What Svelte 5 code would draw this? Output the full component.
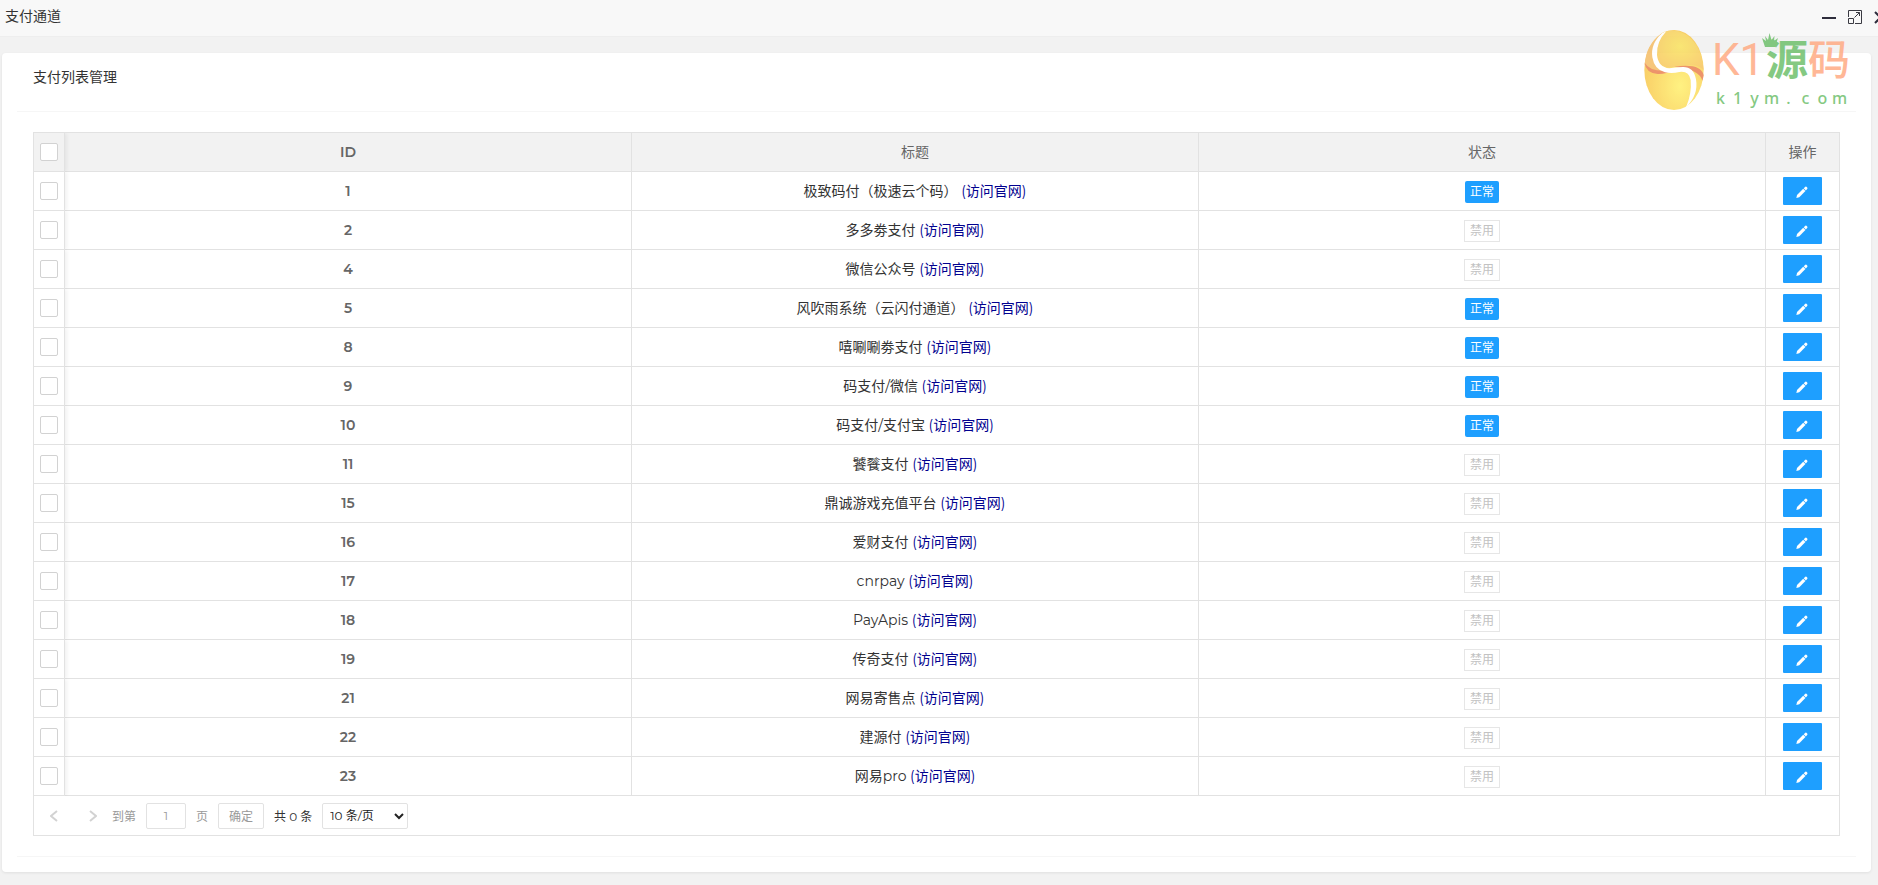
<script lang="ts">
  type Channel = {
    id: number;
    title: string;
    enabled: boolean;
  };

  const channels: Channel[] = [
    { id: 1, title: '极致码付（极速云个码）', enabled: true },
    { id: 2, title: '多多劵支付', enabled: false },
    { id: 4, title: '微信公众号', enabled: false },
    { id: 5, title: '风吹雨系统（云闪付通道）', enabled: true },
    { id: 8, title: '嘻唰唰劵支付', enabled: true },
    { id: 9, title: '码支付/微信', enabled: true },
    { id: 10, title: '码支付/支付宝', enabled: true },
    { id: 11, title: '饕餮支付', enabled: false },
    { id: 15, title: '鼎诚游戏充值平台', enabled: false },
    { id: 16, title: '爱财支付', enabled: false },
    { id: 17, title: 'cnrpay', enabled: false },
    { id: 18, title: 'PayApis', enabled: false },
    { id: 19, title: '传奇支付', enabled: false },
    { id: 21, title: '网易寄售点', enabled: false },
    { id: 22, title: '建源付', enabled: false },
    { id: 23, title: '网易pro', enabled: false }
  ];

  let selected = $state<number[]>([]);
  let page = $state('1');
  let limit = $state('10');

  let allSelected = $derived(selected.length === channels.length);

  function toggleAll() {
    selected = allSelected ? [] : channels.map((c) => c.id);
  }
</script>

<div class="layer">
  <header class="layer__title">
    <span>支付通道</span>
    <div class="layer__tools">
      <button type="button" aria-label="最小化">
        <svg width="14" height="14" viewBox="0 0 14 14"><path d="M0 8h14" stroke="#2e2d3c" stroke-width="2" /></svg>
      </button>
      <button type="button" aria-label="最大化">
        <svg width="14" height="14" viewBox="0 0 14 14" fill="none" stroke="#3a3a42">
          <path d="M.5 7V.5h13v13H7" />
          <path d="M.5 8.5h5v5h-5z" />
          <path d="M6.5 7.5l5-5M8 2.5h3.5V6" />
        </svg>
      </button>
      <button type="button" aria-label="关闭">
        <svg width="14" height="14" viewBox="0 0 14 14"><path d="M1 2l11 11M12 2L1 13" stroke="#2e2d3c" stroke-width="2" /></svg>
      </button>
    </div>
  </header>

  <main class="card">
    <h2 class="card__header">支付列表管理</h2>

    <div class="grid">
      <table>
        <colgroup>
          <col class="col-check" />
          <col />
          <col />
          <col />
          <col class="col-tool" />
        </colgroup>
        <thead>
          <tr>
            <th class="check"><input type="checkbox" aria-label="全选" checked={allSelected} onchange={toggleAll} /></th>
            <th class="num">ID</th>
            <th>标题</th>
            <th>状态</th>
            <th>操作</th>
          </tr>
        </thead>
        <tbody>
          {#each channels as channel (channel.id)}
            <tr>
              <td class="check">
                <input type="checkbox" aria-label={channel.title} value={channel.id} bind:group={selected} />
              </td>
              <td class="num">{channel.id}</td>
              <td class="name">{channel.title} <a href="#{channel.id}">(访问官网)</a></td>
              <td>
                <button type="button" class="tag" class:tag--off={!channel.enabled}>{channel.enabled ? '正常' : '禁用'}</button>
              </td>
              <td>
                <button type="button" class="edit" aria-label="编辑">
                  <svg width="12" height="12" viewBox="0 0 14 14" fill="#fff">
                    <path d="M.4 14l.8-3.400 7.200-7.300 2.600 2.500-7.200 7.200z" />
                    <path d="M9 2.700l1.300-1.300a1.600 1.600 0 0 1 2.500 0a1.600 1.600 0 0 1 0 2.300l-1.300 1.600z" />
                  </svg>
                </button>
              </td>
            </tr>
          {/each}
        </tbody>
      </table>

      <form class="pager" onsubmit={(e) => e.preventDefault()}>
        <button type="button" class="pager__arrow" aria-label="上一页">
          <svg width="8" height="12" viewBox="0 0 8 12"><path d="M7 1L1 6l6 5" /></svg>
        </button>
        <button type="button" class="pager__arrow" aria-label="下一页">
          <svg width="8" height="12" viewBox="0 0 8 12"><path d="M1 1l6 5-6 5" /></svg>
        </button>
        <label for="page">到第</label>
        <input id="page" type="text" bind:value={page} />
        <span>页</span>
        <button type="submit" class="pager__ok">确定</button>
        <span class="pager__count">共 0 条</span>
        <select aria-label="每页条数" bind:value={limit}>
          <option value="10">10 条/页</option>
          <option value="20">20 条/页</option>
          <option value="50">50 条/页</option>
        </select>
      </form>
    </div>
  </main>

  <div class="mark">
    <svg class="mark__egg" width="60" height="80" viewBox="0 0 178 240">
      <defs>
        <radialGradient id="top" cx=".5" cy=".4" r=".7">
          <stop offset="0" stop-color="#fbe45f" />
          <stop offset="1" stop-color="#f7c45c" />
        </radialGradient>
        <radialGradient id="low" cx=".6" cy=".7" r=".6">
          <stop offset="0" stop-color="#fff06c" />
          <stop offset="1" stop-color="#f9c84e" />
        </radialGradient>
      </defs>
      <ellipse cx="89" cy="120" rx="89" ry="120" fill="url(#low)" />
      <path d="M52 10C90-14 170 10 178 120Q160 100 115 108L75 113Q30 108 38 60Z" fill="url(#top)" />
      <path d="M52 10Q4 45 1 105Q24 128 60 122Q20 100 52 10Z" fill="#f5bd65" />
      <path d="M1 98Q20 130 85 120Q66 133 40 132Q4 128 1 98Z" fill="#ea8252" />
      <path d="M90 110Q170 98 178 136Q176 146 174 152Q166 118 90 110Z" fill="#ea8252" />
      <path d="M54 9Q18 40 24 82Q30 119 62 127Q84 131 105 126Q134 122 139 150Q143 190 125 232Q163 195 155 148Q148 110 115 111Q92 112 75 115Q42 112 38 75Q36 35 66 4Z" fill="#fff" />
    </svg>
    <div class="mark__words">
      <div class="mark__name">
        <span class="mark__latin">K1</span>
        <span class="mark__green">源<svg class="mark__crown" width="16" height="16" viewBox="0 0 16 16">
            <path d="M3 15L0 6l4 3L3 4l3 4 1.500-7L9.500 8l3-4-.5 5 4-3-3 9z" />
          </svg></span>
        <span>码</span>
      </div>
      <div class="mark__site">
        {#each 'k1ym.com' as letter}<span>{letter}</span>{/each}
      </div>
    </div>
  </div>
</div>

<style>
  :global(body) {
    margin: 0;
    background: #f2f2f2;
    font-family: Montserrat, Inter, 'Noto Sans CJK SC', sans-serif;
    font-size: 14px;
    color: #333;
  }
  button,
  input,
  select {
    font-family: inherit;
    margin: 0;
  }
  button {
    cursor: pointer;
  }
  .layer {
    position: relative;
    overflow: hidden;
    padding-bottom: 12px;
  }
  .layer__title {
    display: flex;
    justify-content: space-between;
    height: 36px;
    padding-left: 5px;
    background: #f8f8f8;
    border-bottom: 1px solid #eee;
    line-height: 32px;
  }
  .layer__tools {
    display: flex;
    align-items: center;
    gap: 12px;
    height: 34px;
    margin-right: -10px;
  }
  .layer__tools button {
    display: flex;
    padding: 0;
    border: 0;
    background: none;
  }
  .card {
    margin: 16px 7px 0 2px;
    padding: 0 15px 15px;
    background: #fff;
    border-radius: 4px;
    box-shadow: 0 1px 3px rgba(0, 0, 0, 0.08);
  }
  .card__header {
    margin: 0;
    padding: 14px 16px 24px;
    border-bottom: 1px solid #f6f6f6;
    font-size: 14px;
    font-weight: 400;
    line-height: 20px;
  }
  .grid {
    margin: 20px 16px;
    border: 1px solid #e2e2e2;
  }
  .card::after {
    content: '';
    display: block;
    height: 1px;
    background: #f6f6f6;
  }
  table {
    width: 100%;
    table-layout: fixed;
    border-collapse: separate;
    border-spacing: 0;
  }
  .col-check {
    width: 31px;
  }
  .col-tool {
    width: 73px;
  }
  th,
  td {
    box-sizing: border-box;
    height: 39px;
    padding: 0;
    border-right: 1px solid #e2e2e2;
    border-bottom: 1px solid #e2e2e2;
    text-align: center;
    vertical-align: middle;
    font-weight: 400;
    line-height: 20px;
    color: #666;
  }
  th {
    background: #f2f2f2;
  }
  th:last-child,
  td:last-child {
    border-right: 0;
  }
  .num {
    font-weight: 600;
  }
  .check {
    box-shadow: 2px 0 4px rgba(0, 0, 0, 0.06);
    clip-path: inset(0 -8px 0 0);
  }
  .check input {
    display: block;
    appearance: none;
    width: 18px;
    height: 18px;
    margin: 0 auto;
    background: #fff;
    border: 1px solid #d2d2d2;
    border-radius: 2px;
  }
  .check input:checked {
    background: #1e9fff;
    border-color: #1e9fff;
  }
  .name {
    color: #333;
  }
  a {
    color: #01018f;
    text-decoration: none;
  }
  .tag {
    box-sizing: border-box;
    display: block;
    width: 34px;
    height: 22px;
    margin: 2px auto 0;
    padding: 0;
    border: 0;
    border-radius: 2px;
    background: #1e9fff;
    color: #fff;
    font-size: 12px;
    line-height: 20px;
  }
  .tag--off {
    width: 36px;
    border: 1px solid #e6e6e6;
    border-radius: 0;
    background: #fff;
    color: #c2c2c2;
  }
  .edit {
    display: flex;
    justify-content: center;
    align-items: center;
    width: 39px;
    height: 28px;
    margin: 0 auto;
    padding: 2px 2px 0 0;
    border: 0;
    border-radius: 1px;
    background: #1e9fff;
  }
  .pager {
    display: flex;
    align-items: center;
    height: 39px;
    padding-left: 16px;
    font-size: 12px;
    color: #999;
  }
  .pager > * {
    box-sizing: border-box;
    margin-right: 10px;
  }
  .pager__arrow {
    display: flex;
    width: 8px;
    padding: 0;
    border: 0;
    background: none;
  }
  .pager__arrow:first-child {
    margin-right: 31px;
  }
  .pager__arrow + label {
    margin-left: 5px;
  }
  .pager__arrow path {
    fill: none;
    stroke: #d2d2d2;
    stroke-width: 2;
  }
  .pager input,
  .pager__ok,
  .pager select {
    height: 26px;
    padding: 0;
    border: 1px solid #e2e2e2;
    border-radius: 2px;
    background: #fff;
    font-size: 12px;
    color: #999;
  }
  .pager input {
    width: 40px;
    text-align: center;
  }
  .pager__ok {
    width: 46px;
  }
  .pager__count {
    color: #333;
  }
  .pager select {
    width: 86px;
    padding-left: 3px;
    color: #222;
  }
  /* site mark floats over the window corner */
  .mark {
    position: absolute;
    top: 30px;
    right: 28px;
    display: flex;
    gap: 8px;
    opacity: 0.85;
    color: #ffab84;
    pointer-events: none;
  }
  .mark__name {
    display: flex;
    align-items: center;
    height: 60px;
    font-size: 42px;
    font-weight: 500;
    line-height: 60px;
  }
  .mark__latin {
    width: 54px;
    font-family: 'Liberation Sans Narrow', Roboto, sans-serif;
    font-size: 44px;
    font-weight: 400;
  }
  .mark__green {
    position: relative;
    color: #6fc06d;
    font-weight: 700;
  }
  .mark__crown {
    position: absolute;
    left: -4px;
    top: 2px;
    fill: #6fc06d;
  }
  .mark__site {
    display: grid;
    grid-template-columns: repeat(8, 1fr);
    margin-right: 2px;
    font-family: 'Noto Sans', sans-serif;
    font-size: 16px;
    font-weight: 500;
    line-height: 16px;
    text-align: center;
    color: #6fc06d;
  }
</style>
